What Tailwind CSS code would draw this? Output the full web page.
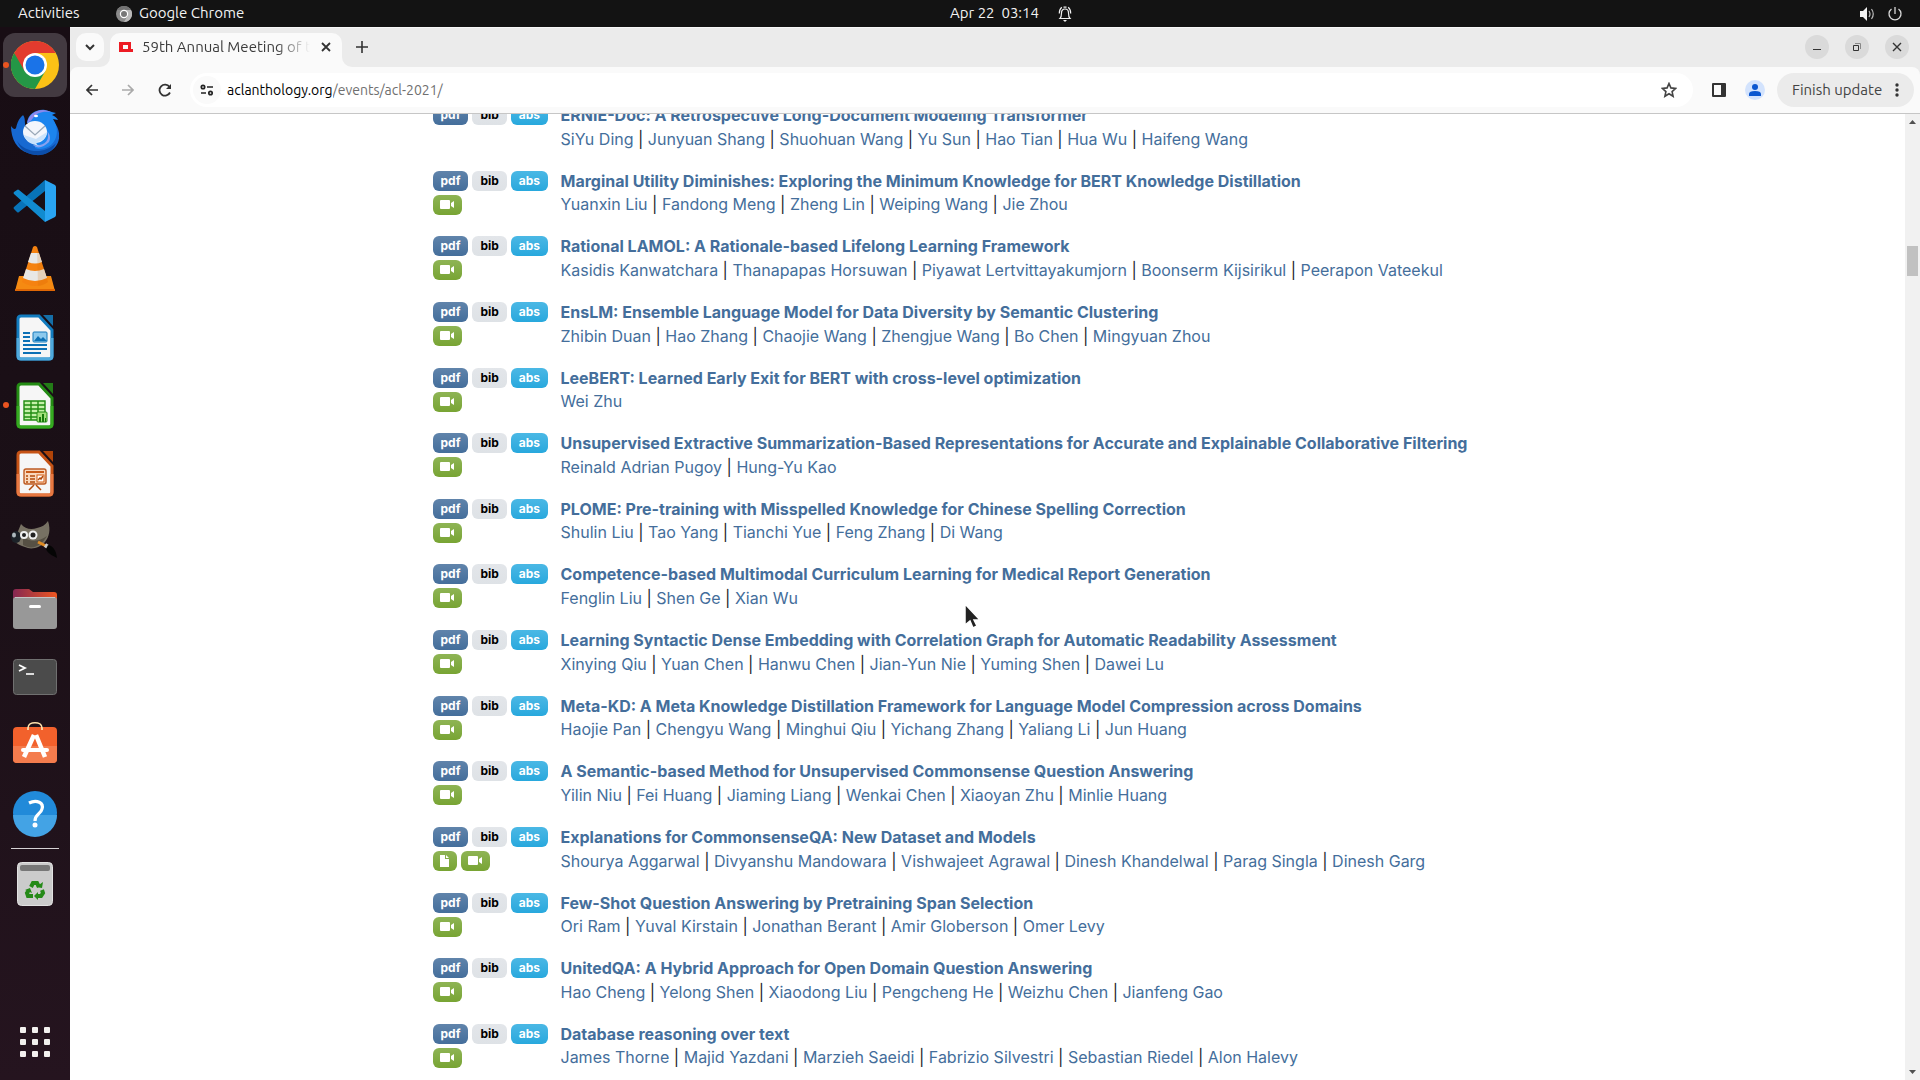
<!DOCTYPE html>
<html lang="en">
<head>
    <meta charset="UTF-8">
    <meta name="viewport" content="width=device-width, initial-scale=1.0">
    <title>59th Annual Meeting of the Association for Computational Linguistics</title>
    <script src="https://cdn.jsdelivr.net/npm/@tailwindcss/browser@4"></script>
</head>
<body class="h-screen overflow-hidden flex flex-col bg-white font-['Ubuntu','Noto_Sans',sans-serif]">

    <!-- Top bar -->
    <header class="h-[27px] shrink-0 bg-[#131313] text-[#f2f2f2] text-[15px] grid grid-cols-3 items-center pl-[18px] pr-[17px]">
        <div class="flex items-center">
            <button class="w-[98px] text-left">Activities</button>
            <button class="flex items-center gap-[7px]">
                <svg class="size-4" viewBox="0 0 16 16"><circle cx="8" cy="8" r="8" fill="#8b8b8b"/><path d="M8 4h7A8 8 0 0 1 8 16l3.500-6z" fill="#b9b9b9"/><path d="M1 4a8 8 0 0 1 14 0H8z" fill="#737373"/><circle cx="8" cy="8" r="3.600" fill="#777" stroke="#fff" stroke-width="1.200"/></svg>
                Google Chrome
            </button>
        </div>
        <div class="flex items-center justify-center gap-[18px] pl-[102px]">
            <button class="whitespace-pre">Apr 22  03:14</button>
            <svg class="size-4" viewBox="0 0 16 16" fill="none" stroke="#f2f2f2" stroke-width="1.200"><path d="M3 12.500c1.500-1.500 1.500-3 1.500-5.500 0-2.500 1.300-4 3.500-4s3.500 1.500 3.500 4c0 2.500 0 4 1.500 5.500zM2.300 7.500c0-3 .8-5 2.500-6.300M13.700 7.500c0-3-.8-5-2.500-6.300M6.500 1.200h3"/><path d="M6 14h4l-2 2z" fill="#f2f2f2" stroke="none"/></svg>
        </div>
        <div class="flex items-center justify-end gap-3">
            <svg class="size-4" viewBox="0 0 16 16"><path d="M1 5h3l4-4v14l-4-4H1z" fill="#f2f2f2"/><path d="M10 5q2 3 0 6M12.500 3q3.500 5 0 10" fill="none" stroke="#bbb" stroke-width="1.200"/></svg>
            <svg class="size-4" viewBox="0 0 16 16" fill="none" stroke="#d8d8d8" stroke-width="1.300"><path d="M8 1v7M4.500 3a6 6 0 1 0 7 0"/></svg>
        </div>
    </header>

    <div class="flex flex-1 min-h-0">

        <!-- Dock -->
        <nav class="w-[70px] shrink-0 bg-linear-to-b from-[#180d14] via-[#1b1017] to-[#25141f] flex flex-col items-center pt-[6px]">
            <div class="flex flex-col gap-1">
                <button aria-label="Google Chrome" class="relative size-16 rounded-xl bg-[#433a41] grid place-items-center">
                    <span class="absolute left-0 size-[6px] rounded-full bg-[#e95420]"></span>
                    <svg class="size-12" viewBox="0 0 48 48"><circle cx="24" cy="24" r="24" fill="#fbc116"/><path d="M3.200 12A24 24 0 0 0 24 48l10.400-18L24 24z" fill="#249746"/><path d="M3.200 12A24 24 0 0 1 44.800 12H24v12l-10.400 6z" fill="#e33b2e"/><circle cx="24" cy="24" r="12" fill="#fff"/><circle cx="24" cy="24" r="9.500" fill="#1a73e8"/></svg>
                </button>
                <button aria-label="Thunderbird" class="size-16 grid place-items-center">
                    <svg class="size-12" viewBox="0 0 48 48"><path d="M0 17c2 3 4 4 5 2 1-4 2-8 5-11 1-1 2-2 2-2 3 4 1 8 3 13l28-6c6 7 7 17 2 24-6 8-17 11-28 7C6 41 0 30 0 17z" fill="#1769d1"/><path d="M16 14C17 5 25 0 34 1c4 1 6 2 11 3l-4 2c3 1 5 3 6 5l-5-1c6 9 5 20-2 26-5 4-12 5-16 3V14z" fill="#1c85ee"/><path d="M16 14c2-8 8-13 16-13 3 0 6 1 8 2-10-1-14 1-18 6-2 3-4 4-6 5z" fill="#8b88ed"/><path d="M6 32c8 12 27 14 39 2-3 9-12 13-21 12C15 45 9 40 6 32z" fill="#0c4eaa"/><path d="M36 22c4 9-3 16-14 14 4 4 10 3 16-3 2-4 1-8-2-11z" fill="#89a2ef"/><ellipse cx="24" cy="23" rx="12" ry="11" fill="#f3f6fc"/><path d="M13 26c2 8 8 9 15 11-3-2-3-3-2-4 6-1 9-4 10-10l-11 7z" fill="#c9e2fb"/><path d="M14 17l10 9 10-9" fill="none" stroke="#9aa8b8" stroke-width="1.300"/><ellipse cx="25" cy="7" rx="2" ry="1.200" fill="#fff"/></svg>
                </button>
                <button aria-label="Visual Studio Code" class="size-16 grid place-items-center">
                    <svg class="size-12" viewBox="0 0 48 48"><path d="M34 3v11L8 35q-1 1-2 0l-3-3q-1-1 0-2z" fill="#0873b8"/><path d="M3 17q-1-1 0-2l3-2q1-1 2 0l26 21v11z" fill="#118bd0"/><path d="M34 3l10 5q1 1 1 2v28q0 1-1 2l-10 5z" fill="#29a4f2"/></svg>
                </button>
                <button aria-label="VLC media player" class="size-16 grid place-items-center">
                    <svg class="size-12" viewBox="0 0 48 48"><path d="M8 31h32l4 15H4z" fill="#f58a12"/><path d="M4 44h40v2H4z" fill="#e06705"/><path d="M22 2q2-2 4 0l11 35q-13 8-26 0z" fill="#f58210"/><path d="M20 8h8l3 9q-7 3-14 0zM15 24q9 4 18 0l3 9q-12 6-24 0z" fill="#e8e8e6"/><path d="M26 2l11 35q-5 4-10 4z" fill="#d56a00" opacity=".18"/></svg>
                </button>
                <button aria-label="LibreOffice Writer" class="size-16 grid place-items-center">
                    <svg class="size-12" viewBox="0 0 48 48"><path d="M10 3h18l13 14v26q0 3-3 3H10q-3 0-3-3V6q0-3 3-3z" fill="#f6f6f6" stroke="#127cbf" stroke-width="3"/><path d="M7 25v18q0 3 3 3h28q3 0 3-3V25" fill="none" stroke="#4fa9dc" stroke-width="3"/><path d="M32 2h10v11z" fill="#156fa8"/><path d="M12 20h7M12 24h7M12 28h7M12 32h24M12 36h24M12 40h18" stroke="#0c70b5" stroke-width="2"/><rect x="22" y="19" width="14" height="10" rx="1" fill="#8cc9ed" stroke="#1579bb"/><path d="M23 28l4-5 3 3 2-2 4 4z" fill="#0c70b5"/></svg>
                </button>
                <button aria-label="LibreOffice Calc" class="relative size-16 grid place-items-center">
                    <span class="absolute left-0 size-[6px] rounded-full bg-[#e95420]"></span>
                    <svg class="size-12" viewBox="0 0 48 48"><path d="M10 3h18l13 14v26q0 3-3 3H10q-3 0-3-3V6q0-3 3-3z" fill="#f6f6f6" stroke="#238b13" stroke-width="3"/><path d="M7 25v18q0 3 3 3h28q3 0 3-3V25" fill="none" stroke="#35aa20" stroke-width="3"/><path d="M32 2h10v11z" fill="#237c17"/><path d="M13 20h21v19H13zM13 24h21M13 28h21M13 32h21M13 36h21M20 20v19M27 20v19" fill="#c5f1a9" stroke="#218c12" stroke-width="1.400"/><rect x="26" y="31" width="10" height="10" rx="1" fill="#a2df7a" stroke="#218c12"/><path d="M28 36h2v5h-2zM31 33h2v8h-2zM34 37h1v4h-1z" fill="#177a0c"/></svg>
                </button>
                <button aria-label="LibreOffice Impress" class="size-16 grid place-items-center">
                    <svg class="size-12" viewBox="0 0 48 48"><path d="M10 3h18l13 14v26q0 3-3 3H10q-3 0-3-3V6q0-3 3-3z" fill="#f6f6f6" stroke="#c65315" stroke-width="3"/><path d="M7 25v18q0 3 3 3h28q3 0 3-3V25" fill="none" stroke="#e77842" stroke-width="3"/><path d="M32 2h10v11z" fill="#b04408"/><rect x="13" y="20" width="22" height="15" rx="2" fill="#f9d8bd" stroke="#bd5b23" stroke-width="1.400"/><path d="M15 23h18" stroke="#c85a18" stroke-width="2"/><path d="M15 27h2M15 30h2M15 33h2M19 27h5M19 30h5M19 33h5" stroke="#b34a0a" stroke-width="1.500"/><rect x="26" y="26" width="7" height="7" fill="#fff" stroke="#d55c12"/><path d="M27 31l2-2 1 1 2-3M23 36l-5 5M25 36l5 5" stroke="#b34a0a" stroke-width="1.500" fill="none"/></svg>
                </button>
                <button aria-label="GIMP" class="size-16 grid place-items-center">
                    <svg class="size-12" viewBox="0 0 48 48"><path d="M10 7c4 5 10 6 16 4 5-1 8-3 11-7 3 9 1 16-3 21-5 6-14 8-20 5-4-1-8-3-11-6z" fill="#777163"/><path d="M12 20c7 5 16 5 24-1-5 9-14 15-24 9z" fill="#565044"/><ellipse cx="5" cy="20" rx="5" ry="6" fill="#1c2228"/><ellipse cx="3" cy="18" rx="2" ry="2.500" fill="#aeb8bd"/><circle cx="13" cy="18" r="4" fill="#f0f0f0"/><circle cx="22" cy="18" r="4.500" fill="#f0f0f0"/><circle cx="13" cy="18" r="2" fill="#222"/><circle cx="22" cy="18" r="2.500" fill="#222"/><path d="M27 25l10 5" stroke="#e08b23" stroke-width="3"/><path d="M34 28l3 2" stroke="#ccc" stroke-width="4"/><path d="M37 28c5 1 8 5 9 13-5-3-9-4-11-9z" fill="#050505"/></svg>
                </button>
                <button aria-label="Files" class="size-16 grid place-items-center">
                    <svg class="size-12" viewBox="0 0 48 48"><defs><linearGradient id="folder"><stop stop-color="#852752"/><stop offset="1" stop-color="#ee5721"/></linearGradient></defs><path d="M2 14V7q0-3 3-3h13l4 3h21q3 0 3 3v6z" fill="url(#folder)"/><rect x="2" y="12" width="44" height="32" rx="3" fill="#989898"/><path d="M4 12.500h40" stroke="#c4c4c4"/><rect x="18" y="20" width="12" height="3" rx="1.500" fill="#fff"/></svg>
                </button>
                <button aria-label="Terminal" class="size-16 grid place-items-center">
                    <svg class="size-12" viewBox="0 0 48 48"><rect x="2.500" y="6.500" width="43" height="35" rx="3" fill="#4b4b4b" stroke="#707070"/><path d="M8 12l6 3-6 3" fill="none" stroke="#fff" stroke-width="1.800"/><path d="M15 21h8" stroke="#fff" stroke-width="1.600"/></svg>
                </button>
                <button aria-label="Ubuntu Software" class="size-16 grid place-items-center">
                    <svg class="size-12" viewBox="0 0 48 48"><rect x="2" y="6" width="44" height="36" rx="4" fill="#f2612c"/><path d="M2 25h44v13q0 4-4 4H6q-4 0-4-4z" fill="#f47c4d"/><path d="M17 9V7c0-7 14-7 14 0v2" fill="none" stroke="#ffe2ad" stroke-width="1.700"/><path d="M23 14L13 36M25 14l9 22" stroke="#fff" stroke-width="4.500"/><path d="M12 29h24" stroke="#fff" stroke-width="4" stroke-linecap="round"/></svg>
                </button>
                <button aria-label="Help" class="size-16 grid place-items-center">
                    <svg class="size-12" viewBox="0 0 48 48"><circle cx="24" cy="24" r="22" fill="#218ad9"/><path d="M2 26a22 22 0 0 0 44 0z" fill="#43a3e5"/><path d="M18 14c8-4 15 0 13 6-1 5-7 5-7 12" fill="none" stroke="#fff" stroke-width="3.200"/><circle cx="24" cy="36" r="2.500" fill="#fff"/></svg>
                </button>
            </div>
            <hr class="w-12 my-[3px] border-[#d6d2d4]">
            <button aria-label="Trash" class="size-16 shrink-0 grid place-items-center">
                <svg class="size-12" viewBox="0 0 48 48"><rect x="6.500" y="2.500" width="35" height="43" rx="4" fill="#cbcbcb" stroke="#e2e2e2"/><rect x="9" y="5" width="30" height="6" rx="2" fill="#777"/><g fill="none" stroke="#258a18" stroke-width="4"><path d="M20 27l2-4h4l2 4M31 30l1 3-2 3h-4M22 36h-5l-1-3 2-3"/></g><path d="M25 27l6 1 1-6zM27 32v8l-4-4zM14 30l5-2 2 5z" fill="#258a18"/></svg>
            </button>
            <button aria-label="Show Applications" class="mt-auto mb-[23px] size-[30px]">
                <svg class="size-[30px]" viewBox="0 0 30 30" fill="#f2f0ee"><rect width="6" height="6" rx="1"/><rect x="12" width="6" height="6" rx="1"/><rect x="24" width="6" height="6" rx="1"/><rect y="12" width="6" height="6" rx="1"/><rect x="12" y="12" width="6" height="6" rx="1"/><rect x="24" y="12" width="6" height="6" rx="1"/><rect y="24" width="6" height="6" rx="1"/><rect x="12" y="24" width="6" height="6" rx="1"/><rect x="24" y="24" width="6" height="6" rx="1"/></svg>
            </button>
        </nav>

        <!-- Browser window -->
        <div class="flex-1 min-w-0 flex flex-col">

            <!-- Tabs -->
            <div class="h-10 shrink-0 bg-[#ebebeb] border-t border-[#f7f7f7] flex pt-[5px] pl-[6px] pr-[11px] text-[#3c3c3c]">
                <button aria-label="Search tabs" class="size-7 mr-[6px] rounded-[10px] bg-[#fafafa] grid place-items-center">
                    <svg class="size-[10px]" viewBox="0 0 10 10" fill="none" stroke="#333" stroke-width="2"><path d="M1 3l4 4 4-4"/></svg>
                </button>
                <div class="relative w-[232px] h-[34px] rounded-t-[10px] bg-[#fafafa] flex items-center pb-[6px] pl-[9px] pr-[10px]">
                    <svg class="absolute -left-[10px] bottom-0 size-[10px]" viewBox="0 0 10 10"><path d="M10 0v10H0A10 10 0 0 0 10 0z" fill="#fafafa"/></svg>
                    <svg class="absolute -right-[10px] bottom-0 size-[10px]" viewBox="0 0 10 10"><path d="M0 0v10h10A10 10 0 0 1 0 0z" fill="#fafafa"/></svg>
                    <svg class="w-[14px] h-3 shrink-0" viewBox="0 0 14 12"><path d="M0 1h12v7h2v3H0zM4 4v4h5V4z" fill="#ed1c24" fill-rule="evenodd"/></svg>
                    <span class="ml-[9px] w-[168px] overflow-hidden whitespace-nowrap text-[15px] mask-r-from-80% mask-r-to-100%">59th Annual Meeting of the</span>
                    <button aria-label="Close tab" class="ml-auto"><svg class="size-3" viewBox="0 0 12 12" stroke="#333" stroke-width="1.800"><path d="M2 2l8 8M10 2l-8 8"/></svg></button>
                </div>
                <button aria-label="New tab" class="size-7 ml-[6px] grid place-items-center">
                    <svg class="size-3" viewBox="0 0 12 12" stroke="#333" stroke-width="1.600"><path d="M6 0v12M0 6h12"/></svg>
                </button>
                <div class="ml-auto flex gap-4 pt-[2px]">
                    <button aria-label="Minimize" class="size-6 rounded-full bg-[#dadada] grid place-items-center"><svg class="size-[10px]" viewBox="0 0 10 10"><path d="M1 7h8v1H1z" fill="#333"/></svg></button>
                    <button aria-label="Restore" class="size-6 rounded-full bg-[#dadada] grid place-items-center"><svg class="size-[10px]" viewBox="0 0 10 10" fill="none" stroke="#333"><path d="M3 1.500h5.500V7" stroke="#888"/><path d="M1.500 3.500h5v5h-5z"/></svg></button>
                    <button aria-label="Close" class="size-6 rounded-full bg-[#dadada] grid place-items-center"><svg class="size-[10px]" viewBox="0 0 10 10" stroke="#333" stroke-width="1.400"><path d="M1 1l8 8M9 1l-8 8"/></svg></button>
                </div>
            </div>

            <!-- Toolbar -->
            <div class="shrink-0 bg-[#ebebeb]">
                <div class="h-[47px] bg-[#fafafa] rounded-t-lg border-b border-[#c6c6c6] flex items-center pl-4 pr-[6px]">
                    <div class="flex gap-6 w-[104px]">
                        <button aria-label="Back"><svg class="size-3" viewBox="0 0 12 12" fill="none" stroke="#333" stroke-width="1.700"><path d="M12 6H1M6 1L1 6l5 5"/></svg></button>
                        <button aria-label="Forward"><svg class="size-3" viewBox="0 0 12 12" fill="none" stroke="#aaa" stroke-width="1.700"><path d="M0 6h11M6 1l5 5-5 5"/></svg></button>
                        <button aria-label="Reload"><svg class="size-[14px]" viewBox="0 0 14 14" fill="none" stroke="#333" stroke-width="1.800"><path d="M12 9.500A5.500 5.500 0 1 1 11.500 4"/><path d="M13 1v5H8z" fill="#333" stroke="none"/></svg></button>
                    </div>
                    <form class="flex-1 h-[34px] rounded-full bg-white flex items-center pl-[3px] pr-4">
                        <span class="size-7 rounded-full bg-[#fafafa] grid place-items-center">
                            <svg class="w-[14px] h-3" viewBox="0 0 14 12" fill="none" stroke="#222" stroke-width="1.700"><circle cx="3" cy="3" r="1.700"/><path d="M7 3h6M1 9h5"/><circle cx="10.500" cy="9" r="1.700"/></svg>
                        </span>
                        <label for="address" class="relative ml-[6px] flex-1 text-sm text-[#6f6f6f]">
                            <span class="pointer-events-none absolute inset-y-0 left-0 bg-white text-black" aria-hidden="true">aclanthology.org</span>
                            <input id="address" type="text" aria-label="Address" value="aclanthology.org/events/acl-2021/" class="block w-full outline-none">
                        </label>
                        <button type="button" aria-label="Bookmark this tab"><svg class="size-4" viewBox="0 0 16 16" fill="none" stroke="#444" stroke-width="1.600"><path d="M8 1.500l1.900 4.400 4.800.5-3.600 3.200 1 4.700L8 11.800l-4.100 2.500 1-4.700L1.300 6.400l4.800-.5z"/></svg></button>
                    </form>
                    <button aria-label="Side panel" class="ml-[19px]"><svg class="size-[14px]" viewBox="0 0 14 14"><path d="M1 0h12q1 0 1 1v12q0 1-1 1H1q-1 0-1-1V1q0-1 1-1zM2 2v10h7V2z" fill="#333" fill-rule="evenodd"/></svg></button>
                    <button aria-label="Profile" class="ml-[19px] size-5 rounded-full bg-[#d3e3fd] grid place-items-center"><svg class="size-3" viewBox="0 0 12 12" fill="#0b57d0"><circle cx="6" cy="3" r="3"/><path d="M0 12v-2q0-3 6-3t6 3v2z"/></svg></button>
                    <button class="ml-3 h-[34px] w-[137px] rounded-full bg-[#ebebeb] text-[#444] text-[15px] flex items-center pl-[15px] pr-[15px] justify-between">Finish update <svg class="w-1 h-[14px]" viewBox="0 0 4 14" fill="#333"><circle cx="2" cy="2" r="1.700"/><circle cx="2" cy="7" r="1.700"/><circle cx="2" cy="12" r="1.700"/></svg></button>
                </div>
            </div>

            <!-- Web page -->
            <div class="flex-1 min-h-0 flex">
                <main class="flex-1 h-full overflow-hidden font-['Inter',sans-serif] text-[#212529]">
                    <div id="papers" class="max-w-[1140px] mx-auto px-[15px] -mt-[13px]"></div>
                </main>

                <!-- Scrollbar -->
                <div class="w-[15px] shrink-0 bg-[#f1f1f1] flex flex-col items-center justify-between py-[6px]">
                    <svg class="w-[7px] h-1" viewBox="0 0 7 4"><path d="M0 4l3.500-4L7 4z" fill="#505050"/></svg>
                    <div class="w-[11px] grow pt-[122px]"><div class="h-[30px] bg-[#c1c1c1]"></div></div>
                    <svg class="w-[7px] h-1" viewBox="0 0 7 4"><path d="M0 0l3.500 4L7 0z" fill="#505050"/></svg>
                </div>
            </div>
        </div>
    </div>

    <!-- Mouse pointer -->
    <svg class="fixed left-[963px] top-[602px] w-[19px] h-[28px] pointer-events-none" viewBox="0 0 19 28"><path d="M2 2v21l5-4 3 7 4-2-3-6h6z" fill="#222" stroke="#fff" stroke-width="1.500"/></svg>

    <script>
        const papers = [
            ['ERNIE-Doc: A Retrospective Long-Document Modeling Transformer', 'SiYu Ding|Junyuan Shang|Shuohuan Wang|Yu Sun|Hao Tian|Hua Wu|Haifeng Wang', ''],
            ['Marginal Utility Diminishes: Exploring the Minimum Knowledge for BERT Knowledge Distillation', 'Yuanxin Liu|Fandong Meng|Zheng Lin|Weiping Wang|Jie Zhou', 'video'],
            ['Rational LAMOL: A Rationale-based Lifelong Learning Framework', 'Kasidis Kanwatchara|Thanapapas Horsuwan|Piyawat Lertvittayakumjorn|Boonserm Kijsirikul|Peerapon Vateekul', 'video'],
            ['EnsLM: Ensemble Language Model for Data Diversity by Semantic Clustering', 'Zhibin Duan|Hao Zhang|Chaojie Wang|Zhengjue Wang|Bo Chen|Mingyuan Zhou', 'video'],
            ['LeeBERT: Learned Early Exit for BERT with cross-level optimization', 'Wei Zhu', 'video'],
            ['Unsupervised Extractive Summarization-Based Representations for Accurate and Explainable Collaborative Filtering', 'Reinald Adrian Pugoy|Hung-Yu Kao', 'video'],
            ['PLOME: Pre-training with Misspelled Knowledge for Chinese Spelling Correction', 'Shulin Liu|Tao Yang|Tianchi Yue|Feng Zhang|Di Wang', 'video'],
            ['Competence-based Multimodal Curriculum Learning for Medical Report Generation', 'Fenglin Liu|Shen Ge|Xian Wu', 'video'],
            ['Learning Syntactic Dense Embedding with Correlation Graph for Automatic Readability Assessment', 'Xinying Qiu|Yuan Chen|Hanwu Chen|Jian-Yun Nie|Yuming Shen|Dawei Lu', 'video'],
            ['Meta-KD: A Meta Knowledge Distillation Framework for Language Model Compression across Domains', 'Haojie Pan|Chengyu Wang|Minghui Qiu|Yichang Zhang|Yaliang Li|Jun Huang', 'video'],
            ['A Semantic-based Method for Unsupervised Commonsense Question Answering', 'Yilin Niu|Fei Huang|Jiaming Liang|Wenkai Chen|Xiaoyan Zhu|Minlie Huang', 'video'],
            ['Explanations for CommonsenseQA: New Dataset and Models', 'Shourya Aggarwal|Divyanshu Mandowara|Vishwajeet Agrawal|Dinesh Khandelwal|Parag Singla|Dinesh Garg', 'file video'],
            ['Few-Shot Question Answering by Pretraining Span Selection', 'Ori Ram|Yuval Kirstain|Jonathan Berant|Amir Globerson|Omer Levy', 'video'],
            ['UnitedQA: A Hybrid Approach for Open Domain Question Answering', 'Hao Cheng|Yelong Shen|Xiaodong Liu|Pengcheng He|Weizhu Chen|Jianfeng Gao', 'video'],
            ['Database reasoning over text', 'James Thorne|Majid Yazdani|Marzieh Saeidi|Fabrizio Silvestri|Sebastian Riedel|Alon Halevy', 'video'],
        ];

        const icons = {
            video: '<a href="#" aria-label="Video" class="h-5 px-[7px] rounded-md bg-linear-to-b from-[#8eb454] to-[#78a433] flex items-center"><svg class="w-[15px] h-3" viewBox="0 0 15 12" fill="#fff"><path d="M1 1h8q1 0 1 1v7q0 1-1 1H1q-1 0-1-1V2q0-1 1-1zM11 4l3-2v7l-3-2z"/></svg></a>',
            file: '<a href="#" aria-label="Attachment" class="h-5 px-[7px] rounded-md bg-linear-to-b from-[#8eb454] to-[#78a433] flex items-center"><svg class="w-[10px] h-3" viewBox="0 0 10 12" fill="#fff"><path d="M0 0h5v4h4v8H0zM6 0l3 3H6z"/></svg></a>',
        };

        // One row per paper: badges on the left, title and authors on the right
        document.getElementById('papers').innerHTML = papers.map(([title, authors, extras]) => `
            <div class="flex mb-4">
                <div class="w-32 shrink-0 flex flex-col gap-1 pt-1 text-xs font-bold">
                    <div class="flex gap-1">
                        <a href="#" class="h-5 px-2 rounded-md bg-linear-to-b from-[#6084ab] to-[#446e9b] text-white leading-5">pdf</a>
                        <a href="#" class="h-5 px-2 rounded-md bg-linear-to-b from-[#e3e6ea] to-[#dee2e6] text-black leading-5">bib</a>
                        <a href="#" class="h-5 px-2 rounded-md bg-linear-to-b from-[#4ab8e5] to-[#27a8dd] text-white leading-5">abs</a>
                    </div>
                    <div class="flex gap-1">${extras.split(' ').map(name => icons[name] || '').join('')}</div>
                </div>
                <p class="leading-6">
                    <strong><a href="#" class="align-middle text-[#446e9b]">${title}</a></strong><br>
                    ${authors.split('|').map(name => `<a href="#" class="text-[#446e9b]">${name}</a>`).join(' | ')}
                </p>
            </div>
        `).join('');
    </script>
</body>
</html>
